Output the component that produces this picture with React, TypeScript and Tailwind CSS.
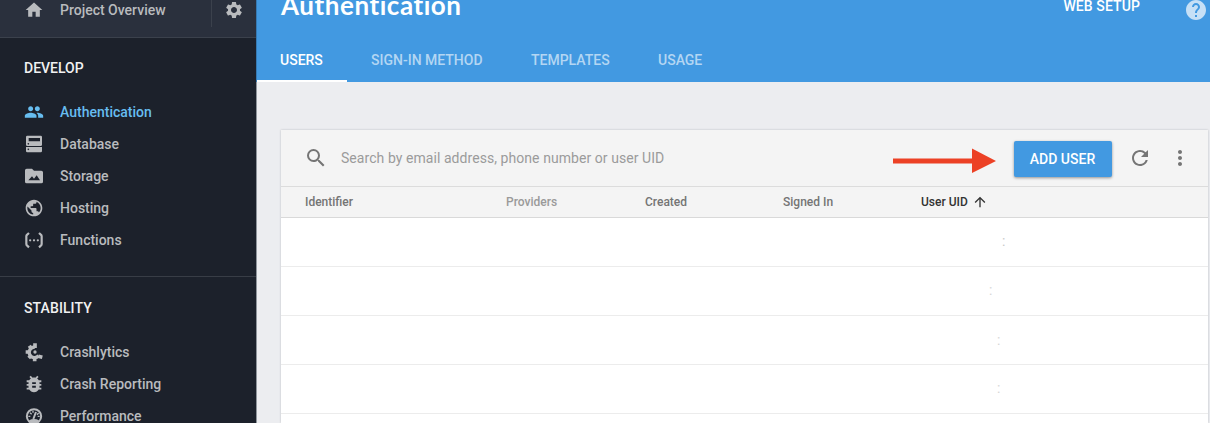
import type { ReactNode } from "react";
import {
  MdArrowUpward,
  MdBugReport,
  MdHelp,
  MdHome,
  MdMoreVert,
  MdPeople,
  MdPublic,
  MdRefresh,
  MdSearch,
  MdSettings,
} from "react-icons/md";

function DatabaseIcon() {
  return (
    <svg viewBox="0 0 60 60" width="20" height="20" fill="currentColor" fillRule="evenodd">
      <path d="M10 5h40a4 4 0 0 1 4 4v23a4 4 0 0 1-4 4H10a4 4 0 0 1-4-4V9a4 4 0 0 1 4-4zM14 12v10h34V12zM13 27a2.500 2.500 0 1 0 0 5a2.500 2.500 0 0 0 0-5z" />
      <path d="M6 39h48v12a4 4 0 0 1-4 4H10a4 4 0 0 1-4-4zM13 43.500a2.500 2.500 0 1 0 0 5a2.500 2.500 0 0 0 0-5z" />
    </svg>
  );
}

function StorageIcon() {
  return (
    <svg viewBox="0 0 60 60" width="20" height="20" fill="currentColor" fillRule="evenodd">
      <path d="M8 8h16l6 6h22a5 5 0 0 1 5 5v28a5 5 0 0 1-5 5H8a5 5 0 0 1-5-5V13a5 5 0 0 1 5-5zM13 43h35L38 28l-8 10-6-7z" />
    </svg>
  );
}

function FunctionsIcon() {
  return (
    <svg viewBox="0 0 60 60" width="20" height="20" fill="currentColor">
      <g fill="none" stroke="currentColor" strokeWidth="6.500">
        <path d="M15 9L9.500 14Q7 16 7 19V42Q7 45 9.500 47L15 52" />
        <path d="M45 9L50.500 14Q53 16 53 19V42Q53 45 50.500 47L45 52" />
      </g>
      <circle cx="18.500" cy="31" r="3.400" />
      <circle cx="30" cy="31" r="3.400" />
      <circle cx="41.500" cy="31" r="3.400" />
    </svg>
  );
}

function CrashlyticsIcon() {
  return (
    <svg viewBox="0 0 60 60" width="20" height="20" fill="none" stroke="currentColor">
      <path d="M33 15A16 16 0 1 0 44 41" strokeWidth="10" />
      <path d="M33 4V18M16 11L22 20M5 30H16M14 48L22 40M32 58V44M43 43L55 46" strokeWidth="11" />
      <circle cx="33" cy="30" r="5" fill="currentColor" stroke="none" />
    </svg>
  );
}

function PerformanceIcon() {
  return (
    <svg viewBox="0 0 60 60" width="20" height="20" fill="none" stroke="currentColor">
      <circle cx="30" cy="31" r="21.500" strokeWidth="6" />
      <path d="M15 43Q30 35 45 43L39 51H21z" fill="currentColor" stroke="none" />
      <path d="M28 39L36 18" strokeWidth="6" />
      <path d="M13 31H19M18 20L23 25M27 14V20M41 31H47M44 21L39 26" strokeWidth="4" />
    </svg>
  );
}

function NavItem({ icon, label, active }: { icon: ReactNode; label: string; active?: boolean }) {
  return (
    <li
      className={`flex h-8 items-center gap-4 pl-6 text-sm font-medium ${active ? "text-[#67bdf0]" : "text-[#b9bbbe]"}`}
    >
      <span className="flex w-5 shrink-0 justify-center">{icon}</span>
      <span>{label}</span>
    </li>
  );
}

function Sidebar() {
  return (
    <nav className="flex w-[256px] shrink-0 flex-col bg-[#1c212b]">
      <div className="flex h-[38px] shrink-0 items-start border-b border-[#3b414c] bg-[#2a303d] text-[#b9bbbe]">
        <div className="flex h-5 w-[211px] items-center gap-4 pl-6">
          <MdHome size={20} />
          <span className="text-sm font-medium">Project Overview</span>
        </div>
        <div className="flex h-[27px] flex-1 items-start border-l border-[#3b414c] pl-3">
          <MdSettings size={20} />
        </div>
      </div>
      <section className="h-[239px] shrink-0 border-b border-[#383d46] pt-5">
        <h2 className="pl-6 text-sm leading-5 font-medium text-[#f1f1f2]">DEVELOP</h2>
        <ul className="pt-[18px]">
          <NavItem icon={<MdPeople size={20} />} label="Authentication" active />
          <NavItem icon={<DatabaseIcon />} label="Database" />
          <NavItem icon={<StorageIcon />} label="Storage" />
          <NavItem icon={<MdPublic size={20} />} label="Hosting" />
          <NavItem icon={<FunctionsIcon />} label="Functions" />
        </ul>
      </section>
      <section className="pt-[21px]">
        <h2 className="pl-6 text-sm leading-5 font-medium tracking-[0.1px] text-[#f1f1f2]">STABILITY</h2>
        <ul className="pt-[18px]">
          <NavItem icon={<CrashlyticsIcon />} label="Crashlytics" />
          <NavItem icon={<MdBugReport size={22} className="shrink-0" />} label="Crash Reporting" />
          <NavItem icon={<PerformanceIcon />} label="Performance" />
        </ul>
      </section>
    </nav>
  );
}

function Header() {
  return (
    <header className="flex h-[82px] shrink-0 flex-col border-l border-[#367ab3] bg-[#4299e1] text-white">
      <div className="flex h-10 items-start justify-between pl-6">
        <h1 className="-mt-[11px] font-['Lato'] text-[26px] leading-8 font-bold tracking-[0.55px]">Authentication</h1>
        <div className="flex items-start pr-[2px]">
          <span className="-mt-1 pr-[44px] text-sm leading-5 font-medium tracking-[0.1px]">WEB SETUP</span>
          <MdHelp size={24} className="-mt-0.5 text-[#c6e0f6]" />
        </div>
      </div>
      <div className="flex h-[42px] text-sm leading-5 font-medium text-[#b3d6f3]">
        <span className="w-[90px] border-b-2 border-white pt-2.5 pl-[23px] text-white">USERS</span>
        <span className="w-40 pt-2.5 pl-6">SIGN-IN METHOD</span>
        <span className="w-[127px] pt-2.5 pl-6">TEMPLATES</span>
        <span className="pt-2.5 pl-6">USAGE</span>
      </div>
    </header>
  );
}

const rowClass = "flex h-[49px] shrink-0 items-center border-b border-[#ececec] text-sm";

function UsersCard() {
  return (
    <div className="flex flex-1 border-l border-[#8f959c] pt-12 pl-6">
      <div className="flex w-[927px] flex-col bg-white shadow-[0_0_2px_#b9bcc0]">
        <div className="flex h-[57px] shrink-0 items-center border-b border-[#dcdcdc] bg-[#f4f4f4] pl-[23px]">
          <MdSearch size={24} className="text-[#757575]" />
          <span className="pl-[13px] text-sm tracking-[0.06px] text-[#9b9b9b]">
            Search by email address, phone number or user UID
          </span>
          <div className="flex flex-1 items-center justify-end pr-4">
            <svg width="103" height="26" viewBox="0 0 103 26" className="mt-[5px] mr-[18px]" fill="#ec4125">
              <path d="M0 10.500H79V0.500L103 13L79 25V15.500H0z" />
            </svg>
            <button className="mt-0.5 h-9 w-[98px] rounded-[2px] bg-[#4299e1] pr-px text-sm font-medium text-white shadow-[0_1px_3px_rgba(0,0,0,0.4)]">
              ADD USER
            </button>
            <MdRefresh size={24} className="ml-4 text-[#757575]" />
            <MdMoreVert size={24} className="ml-4 text-[#757575]" />
          </div>
        </div>
        <div className="grid h-[31px] shrink-0 grid-cols-[201px_139px_138px_138px_1fr] items-center border-b border-[#d9d9d9] bg-[#f4f4f4] pl-6 text-xs font-medium text-[#757575]">
          <span>Identifier</span>
          <span className="text-[#9a9a9a]">Providers</span>
          <span>Created</span>
          <span>Signed In</span>
          <span className="flex items-center gap-1 text-[#333333]">
            User UID <MdArrowUpward size={16} />
          </span>
        </div>
        <div className={`${rowClass} pb-0.5 pl-[721px] text-[#c9c9c9]`}>:</div>
        <div className={`${rowClass} pb-[3px] pl-[708px] text-[#d6d6d6]`}>:</div>
        <div className={`${rowClass} pl-[716px] text-[#d6d6d6]`}>:</div>
        <div className={`${rowClass} pb-0.5 pl-[716px] text-[#d6d6d6]`}>:</div>
      </div>
    </div>
  );
}

export default function App() {
  return (
    <div className="flex h-[423px] w-[1210px] overflow-hidden bg-[#ecedf0] font-['Roboto',sans-serif]">
      <Sidebar />
      <main className="flex flex-1 flex-col">
        <Header />
        <UsersCard />
      </main>
    </div>
  );
}
